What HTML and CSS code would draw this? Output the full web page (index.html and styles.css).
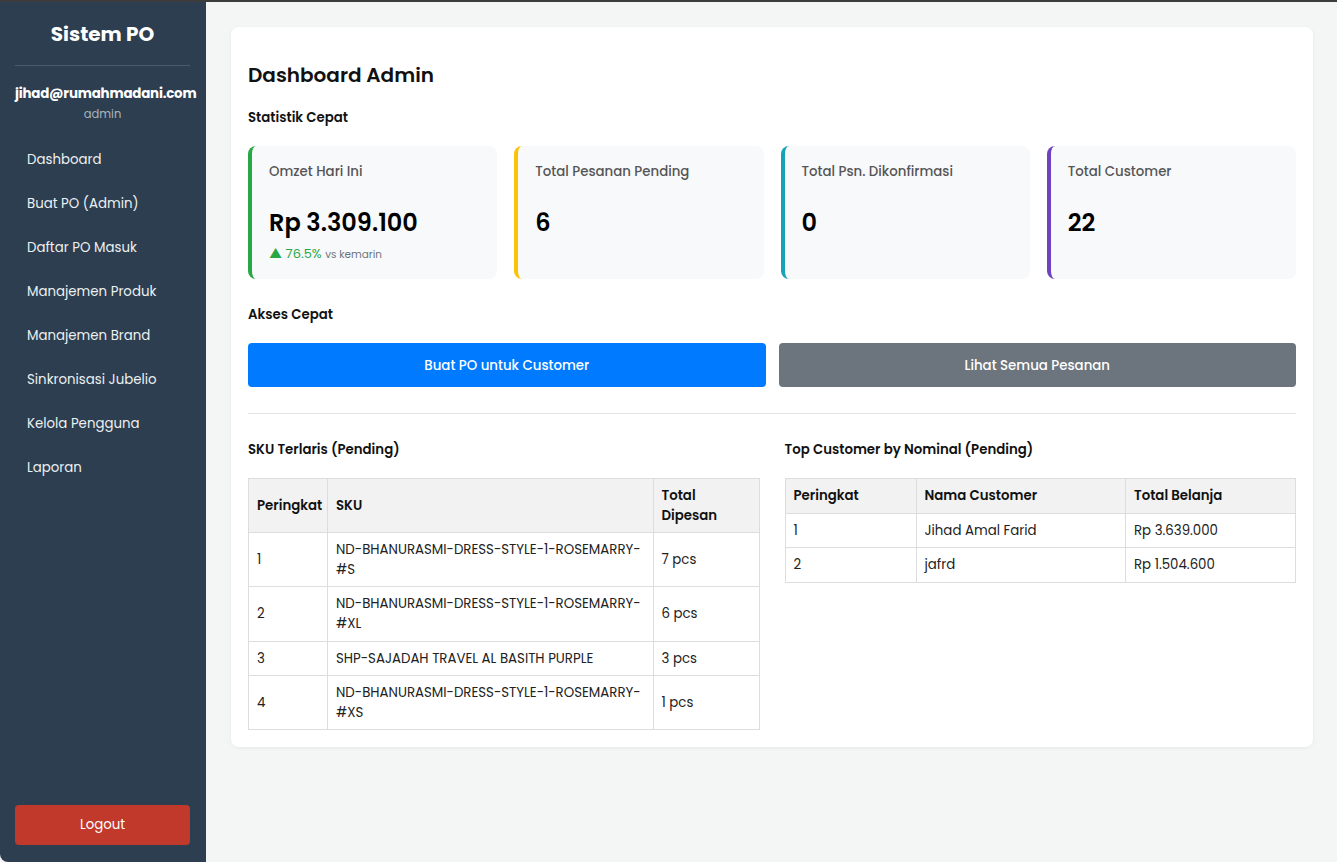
FILE: index.html
```html
<!DOCTYPE html>
<html lang="id">
<head>
<meta charset="utf-8">
<title>Dashboard Admin - Sistem PO</title>
<link rel="stylesheet" href="styles.css">
</head>
<body>
<div class="layout">
  <aside class="sidebar">
    <div class="brand">Sistem PO</div>
    <div class="user">
      <div class="user-email">jihad@rumahmadani.com</div>
      <div class="user-role">admin</div>
    </div>
    <nav class="nav">
      <a class="nav-item" href="#">Dashboard</a>
      <a class="nav-item" href="#">Buat PO (Admin)</a>
      <a class="nav-item" href="#">Daftar PO Masuk</a>
      <a class="nav-item" href="#">Manajemen Produk</a>
      <a class="nav-item" href="#">Manajemen Brand</a>
      <a class="nav-item" href="#">Sinkronisasi Jubelio</a>
      <a class="nav-item" href="#">Kelola Pengguna</a>
      <a class="nav-item" href="#">Laporan</a>
    </nav>
    <a class="logout" href="#">Logout</a>
  </aside>
  <main class="main">
    <section class="card">
      <h1 class="page-title">Dashboard Admin</h1>
      <h3 class="section-title">Statistik Cepat</h3>
      <div class="stats">
        <div class="stat stat-green">
          <div class="stat-label">Omzet Hari Ini</div>
          <div class="stat-value">Rp 3.309.100</div>
          <div class="stat-trend"><span class="trend-up">▲ 76.5%</span> <span class="trend-note">vs kemarin</span></div>
        </div>
        <div class="stat stat-yellow">
          <div class="stat-label">Total Pesanan Pending</div>
          <div class="stat-value">6</div>
        </div>
        <div class="stat stat-teal">
          <div class="stat-label">Total Psn. Dikonfirmasi</div>
          <div class="stat-value">0</div>
        </div>
        <div class="stat stat-purple">
          <div class="stat-label">Total Customer</div>
          <div class="stat-value">22</div>
        </div>
      </div>
      <h3 class="section-title access-title">Akses Cepat</h3>
      <div class="actions">
        <a class="btn btn-primary" href="#">Buat PO untuk Customer</a>
        <a class="btn btn-secondary" href="#">Lihat Semua Pesanan</a>
      </div>
      <hr class="divider">
      <div class="tables">
        <div class="table-block">
          <h3 class="section-title">SKU Terlaris (Pending)</h3>
          <table class="data-table sku-table">
            <colgroup><col class="c-rank"><col class="c-sku"><col class="c-qty"></colgroup>
            <thead>
              <tr><th>Peringkat</th><th>SKU</th><th>Total Dipesan</th></tr>
            </thead>
            <tbody>
              <tr><td>1</td><td>ND-BHANURASMI-DRESS-STYLE-1-ROSEMARRY-#S</td><td>7 pcs</td></tr>
              <tr><td>2</td><td>ND-BHANURASMI-DRESS-STYLE-1-ROSEMARRY-#XL</td><td>6 pcs</td></tr>
              <tr><td>3</td><td>SHP-SAJADAH TRAVEL AL BASITH PURPLE</td><td>3 pcs</td></tr>
              <tr><td>4</td><td>ND-BHANURASMI-DRESS-STYLE-1-ROSEMARRY-#XS</td><td>1 pcs</td></tr>
            </tbody>
          </table>
        </div>
        <div class="table-block">
          <h3 class="section-title">Top Customer by Nominal (Pending)</h3>
          <table class="data-table cust-table">
            <colgroup><col class="c-rank2"><col class="c-name"><col class="c-total"></colgroup>
            <thead>
              <tr><th>Peringkat</th><th>Nama Customer</th><th>Total Belanja</th></tr>
            </thead>
            <tbody>
              <tr><td>1</td><td>Jihad Amal Farid</td><td>Rp 3.639.000</td></tr>
              <tr><td>2</td><td>jafrd</td><td>Rp 1.504.600</td></tr>
            </tbody>
          </table>
        </div>
      </div>
    </section>
  </main>
</div>
</body>
</html>
```
FILE: styles.css
```css
* { box-sizing: border-box; }
html, body { margin: 0; padding: 0; height: 100%; }
body {
  font-family: "Poppins", "Inter", "Noto Sans", sans-serif;
  font-size: 13.33px;
  background: #f4f6f6;
  border-top: 2px solid #3c3c3c;
  color: #212529;
}
.layout { display: flex; height: 860px; }
.sidebar {
  width: 206px;
  flex-shrink: 0;
  background: #2c3e50;
  color: #ecf0f1;
  padding: 15px 16px 17px 15px;
  display: flex;
  flex-direction: column;
  border-bottom-left-radius: 8px;
}
.brand {
  font-size: 20px;
  font-weight: 700;
  text-align: center;
  color: #fff;
  line-height: 34px;
  padding-bottom: 14px;
  border-bottom: 1px solid #4a5b6c;
}
.user { text-align: center; padding-top: 18px; }
.user-email { font-size: 13.4px; font-weight: 700; color: #fff; line-height: 20px; white-space: nowrap; letter-spacing: -0.2px; }
.user-role { font-size: 11.5px; color: #aab4bf; line-height: 18px; margin-top: 1px; }
.nav { display: flex; flex-direction: column; margin-top: 15px; }
.nav-item {
  display: block;
  color: #ecf0f1;
  text-decoration: none;
  font-size: 13.33px;
  line-height: 20px;
  padding: 12px 12px;
}
.logout {
  margin-top: auto;
  display: block;
  background: #c0392b;
  color: #fff;
  text-decoration: none;
  text-align: center;
  font-size: 13.33px;
  line-height: 40px;
  height: 40px;
  border-radius: 4px;
}
.main { flex: 1; padding: 25px 24px 25px 25px; }
.card {
  background: #fff;
  border-radius: 8px;
  box-shadow: 0 1px 4px rgba(0,0,0,0.06);
  padding: 28px 17px 17px 17px;
}
.page-title { margin: 0; font-size: 20px; font-weight: 600; line-height: 40px; color: #111; }
.section-title { margin: 0; font-size: 13.33px; font-weight: 600; line-height: 20px; color: #111; }
.page-title + .section-title { margin-top: 13px; }
.stats {
  display: grid;
  grid-template-columns: repeat(4, 1fr);
  gap: 17px;
  margin-top: 18px;
}
.stat {
  background: #f8f9fa;
  border-radius: 8px;
  border-left: 4px solid #28a745;
  height: 133px;
  padding: 16px 17px 15px;
}
.stat-green { border-left-color: #28a745; }
.stat-yellow { border-left-color: #ffc107; }
.stat-teal { border-left-color: #17a2b8; }
.stat-purple { border-left-color: #6f42c1; }
.stat-label { font-size: 13.33px; font-weight: 500; color: #555; line-height: 20px; }
.stat-value { font-size: 24px; font-weight: 600; color: #000; line-height: 34px; margin-top: 24px; }
.stat-trend { font-size: 13px; line-height: 18px; margin-top: 5px; }
.trend-up { color: #28a745; font-weight: 400; }
.trend-note { color: #6c757d; font-size: 10.4px; }
.access-title { margin-top: 26px; }
.actions {
  display: grid;
  grid-template-columns: 1fr 1fr;
  gap: 13px;
  margin-top: 18px;
}
.btn {
  display: block;
  height: 44px;
  line-height: 45px;
  text-align: center;
  color: #fff;
  text-decoration: none;
  font-size: 13.33px;
  font-weight: 500;
  border-radius: 4px;
}
.btn-primary { background: #007bff; }
.btn-secondary { background: #6c757d; }
.divider { border: 0; border-top: 1px solid #e3e3e3; margin: 26px 0 26px; }
.tables { display: grid; grid-template-columns: 1fr 1fr; gap: 25px; }
.table-block .section-title { margin-bottom: 18px; }
.data-table {
  width: 100%;
  border-collapse: collapse;
  table-layout: fixed;
  font-size: 13.33px;
  line-height: 19.6px;
}
.data-table th, .data-table td {
  border: 1px solid #dddddd;
  padding: 7px 8px;
  text-align: left;
  vertical-align: middle;
}
.data-table th { background: #f2f2f2; font-weight: 600; color: #111; }
.data-table td { color: #222; }
.c-rank { width: 79px; }
.c-qty { width: 106px; }
.c-rank2 { width: 131px; }
.c-total { width: 170px; }
```
